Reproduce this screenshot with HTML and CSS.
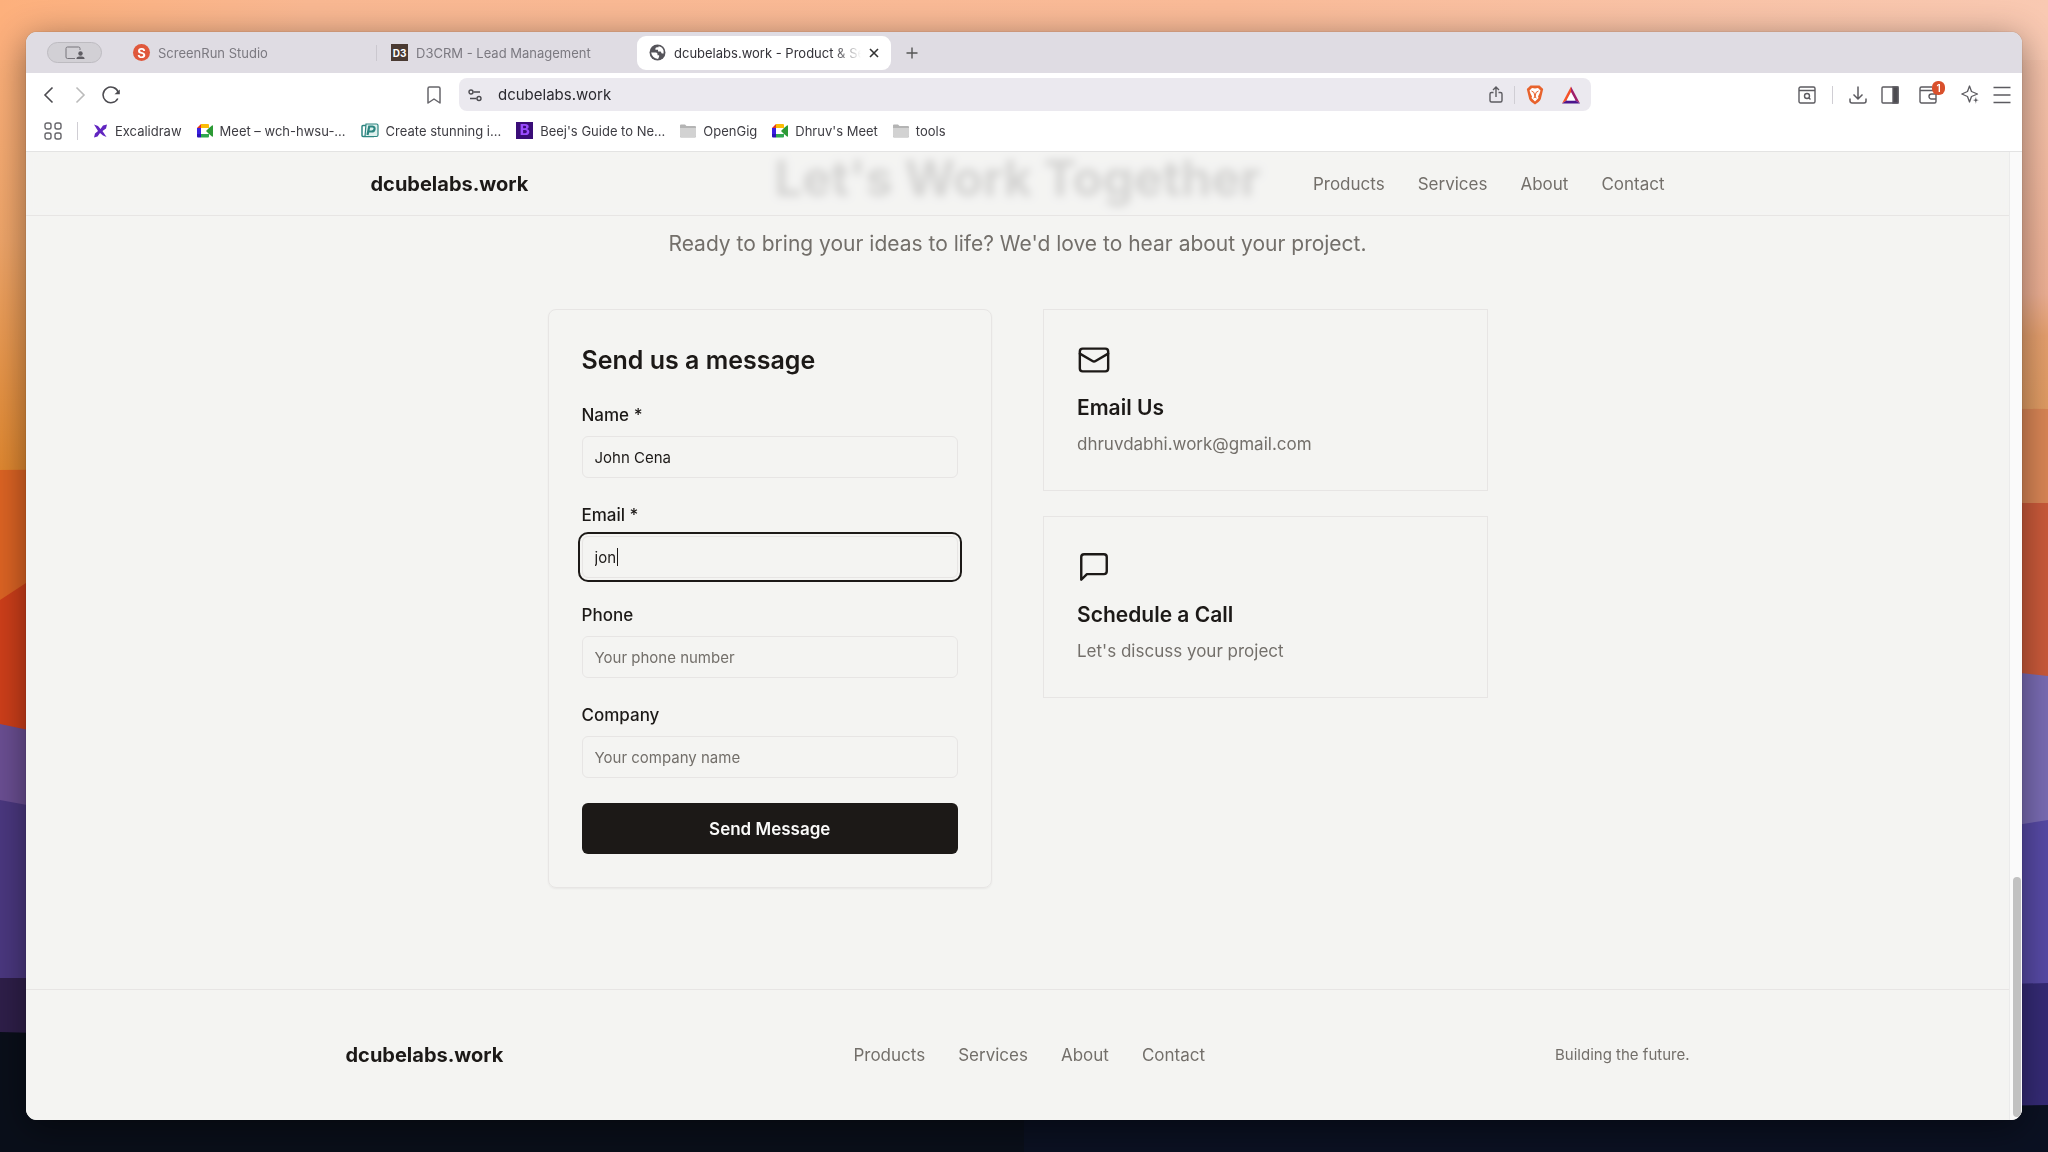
FILE: index.html
```html
<!DOCTYPE html>
<html lang="en">
<head>
<meta charset="UTF-8">
<meta name="viewport" content="width=device-width, initial-scale=1">
<title>dcubelabs.work - Product &amp; Services</title>
<link rel="stylesheet" href="styles.css">
</head>
<body>

<!-- wallpaper -->
<svg class="wallpaper" viewBox="0 0 2048 1152" preserveAspectRatio="none" aria-hidden="true">
  <defs>
    <linearGradient id="sky-left" x1="0" y1="0" x2="0" y2="1">
      <stop offset="0" stop-color="#ffb27e"/>
      <stop offset="0.5" stop-color="#f0a66a"/>
      <stop offset="1" stop-color="#e0872e"/>
    </linearGradient>
    <linearGradient id="sky-right" x1="0" y1="0" x2="0" y2="1">
      <stop offset="0" stop-color="#f9c9b2"/>
      <stop offset="0.7" stop-color="#eeb094"/>
      <stop offset="0.8" stop-color="#e6a06e"/>
      <stop offset="1" stop-color="#e09c62"/>
    </linearGradient>
    <linearGradient id="sky-top" x1="0" y1="0" x2="1" y2="0">
      <stop offset="0" stop-color="#fdb07c"/>
      <stop offset="0.15" stop-color="#f9b892"/>
      <stop offset="0.6" stop-color="#fabb98"/>
      <stop offset="1" stop-color="#f9c9b2"/>
    </linearGradient>
  </defs>
  <rect width="2048" height="1152" fill="#0b1020"/>
  <rect width="1024" height="480" fill="url(#sky-left)"/>
  <rect x="1024" width="1024" height="420" fill="url(#sky-right)"/>
  <rect width="2048" height="60" fill="url(#sky-top)"/>
  <path d="M0 470L1024 460V800H0z" fill="#dd6424"/>
  <path d="M0 600L26 583L1024 500V900H0z" fill="#cf3f1a"/>
  <path d="M0 724L1024 940V1000H0z" fill="#6b4f93"/>
  <path d="M0 800L1024 990V1152H0z" fill="#4b3880"/>
  <path d="M0 978H1024V1152H0z" fill="#2f1f4a"/>
  <path d="M0 1032L1024 1060V1152H0z" fill="#0a0f1a"/>
  <path d="M1024 400L2048 409V800H1024z" fill="#da8656"/>
  <path d="M1024 500L2048 503V900H1024z" fill="#cb5a3a"/>
  <path d="M1024 560L2048 676V1000H1024z" fill="#7a6cb4"/>
  <path d="M1024 980L2048 820V1152H1024z" fill="#574aa6"/>
  <path d="M1024 1010L2048 983V1152H1024z" fill="#352b76"/>
  <path d="M1024 1120L2048 1105V1152H1024z" fill="#0b1122"/>
</svg>

<div class="window">

  <!-- tab strip -->
  <div class="tabs">
    <button class="profile" aria-label="Shared screen">
      <svg width="20" height="14" viewBox="0 0 20 14" fill="none" stroke="#77757b" stroke-width="1">
        <path d="M10 12.500H2.500A1.500 1.500 0 0 1 1 11V2.500A1.500 1.500 0 0 1 2.500 1H13.500A1.500 1.500 0 0 1 15 2.500V4" />
        <circle cx="15.500" cy="7.500" r="2.200" fill="#5f5d63" stroke="none"/>
        <path d="M11.500 13V12Q12 10.500 14 10.500H17Q19 10.500 19.500 12V13z" fill="#5f5d63" stroke="none"/>
      </svg>
    </button>
    <div class="tab">
      <span class="favicon favicon-s">S</span>
      <span class="tab-title">ScreenRun Studio</span>
    </div>
    <div class="tab tab-divided">
      <span class="favicon favicon-d3">D3</span>
      <span class="tab-title">D3CRM - Lead Management</span>
    </div>
    <div class="tab active">
      <svg width="17" height="17" viewBox="0 0 16 16">
        <circle cx="8" cy="8" r="7.500" fill="#55545a"/>
        <path d="M2 8H6.500Q8 8 8 9.500V10.500H9.500V12L8.500 14Q3 13.500 2 8zM6 4.500Q6 3 7.500 3H9V2.200Q12.500 2.800 13.700 6V9H12.500Q11.500 9 11.500 8Q11.500 7 10.500 7H8.500V5.500H6z" fill="#fff"/>
      </svg>
      <span class="tab-title">dcubelabs.work - Product &amp; Se</span>
      <button class="icon-btn" aria-label="Close tab">
        <svg width="10" height="10" viewBox="0 0 10 10" fill="none" stroke="#333" stroke-width="1.600"><path d="M1 1L9 9M9 1L1 9"/></svg>
      </button>
    </div>
    <button class="icon-btn new-tab" aria-label="New tab">
      <svg width="12" height="12" viewBox="0 0 12 12" fill="none" stroke="#555" stroke-width="1.400"><path d="M6 0.500V11.500M0.500 6H11.500"/></svg>
    </button>
  </div>

  <!-- toolbar -->
  <div class="toolbar">
    <div class="toolbar-left">
      <button class="icon-btn" aria-label="Back">
        <svg width="18" height="18" viewBox="0 0 18 18" fill="none" stroke="#4c4b50" stroke-width="1.600"><path d="M12.500 1.500L5 9L12.500 16.500"/></svg>
      </button>
      <button class="icon-btn" aria-label="Forward">
        <svg width="18" height="18" viewBox="0 0 18 18" fill="none" stroke="#bbb" stroke-width="1.600"><path d="M5.500 1.500L13 9L5.500 16.500"/></svg>
      </button>
      <button class="icon-btn" aria-label="Reload">
        <svg width="18" height="18" viewBox="0 0 18 18" fill="none" stroke="#4c4b50" stroke-width="1.600"><path d="M15.800 12.500A7.800 7.800 0 1 1 16.300 6.500"/><path d="M17.800 3.500V8.200H12.500z" fill="#4c4b50" stroke="none"/></svg>
      </button>
      <button class="icon-btn bookmark" aria-label="Bookmark this page">
        <svg width="14" height="18" viewBox="0 0 14 18" fill="none" stroke="#66656a" stroke-width="1.500" stroke-linejoin="round"><path d="M1 2.500A1.500 1.500 0 0 1 2.500 1H11.500A1.500 1.500 0 0 1 13 2.500V17L7 13L1 17z"/></svg>
      </button>
    </div>
    <div class="url-bar">
      <button class="icon-btn" aria-label="Site settings">
        <svg width="14" height="14" viewBox="0 0 14 14" fill="none" stroke="#4c4b50" stroke-width="1.400"><circle cx="3" cy="4" r="2"/><path d="M5.500 4H12M2 10.500H8.500"/><circle cx="11" cy="10.500" r="2"/></svg>
      </button>
      <input class="url-input" type="text" value="dcubelabs.work" aria-label="Address">
      <button class="icon-btn" aria-label="Share">
        <svg width="14" height="18" viewBox="0 0 14 18" fill="none" stroke="#5c5b60" stroke-width="1.400"><path d="M4.500 6.500H2.500A1.500 1.500 0 0 0 1 8V14.500A1.500 1.500 0 0 0 2.500 16H11.500A1.500 1.500 0 0 0 13 14.500V8A1.500 1.500 0 0 0 11.500 6.500H9.500M7 11V1.500M4 4L7 1L10 4"/></svg>
      </button>
      <span class="divider"></span>
      <button class="icon-btn" aria-label="Brave Shields">
        <svg width="18" height="20" viewBox="0 0 18 20"><path d="M4.500 0.500H13.500L15.300 2.300L17.200 4L16.500 7L14.800 14Q14.300 15.500 12.500 17L9 19.500L5.500 17Q3.700 15.500 3.200 14L1.500 7L0.800 4L2.700 2.300z" fill="#e8622c"/><path d="M9 3.500L12 3L14.500 5.500L13.500 8.500L12 11.500L12.500 13L9 16.500L5.500 13L6 11.500L4.500 8.500L3.500 5.500L6 3z" fill="#fff"/><path d="M5.500 6L8 7.500L9 12L10 7.500L12.500 6M7.500 13L9 12L10.500 13" stroke="#e8622c" fill="none"/></svg>
      </button>
      <button class="icon-btn rewards" aria-label="Rewards">
        <svg width="18" height="18" viewBox="0 0 18 18"><path d="M9 0.500L0 17.500L4.500 14.500L9 6z" fill="#f5522a"/><path d="M9 0.500L18 17.500L13.500 14.500L9 6z" fill="#a0206b"/><path d="M0 17.500H18L13.500 14.500H4.500z" fill="#4b148c"/><path d="M9 6.500L13.300 14.500H4.700z" fill="#fff"/></svg>
      </button>
    </div>
    <div class="toolbar-right">
      <button class="icon-btn" aria-label="Search tabs">
        <svg width="18" height="18" viewBox="0 0 18 18" fill="none" stroke="#5c5b60" stroke-width="1.400"><rect x="1" y="1" width="16" height="16" rx="1.500"/><path d="M1 4.500H17M11 12L12.500 13.500"/><circle cx="9" cy="10" r="2.500"/></svg>
      </button>
      <span class="divider"></span>
      <button class="icon-btn" aria-label="Downloads">
        <svg width="18" height="18" viewBox="0 0 18 18" fill="none" stroke="#5c5b60" stroke-width="1.500"><path d="M9 0.500V12.500M4.500 8.500L9 13L13.500 8.500M1 12.500V15A2 2 0 0 0 3 17H15A2 2 0 0 0 17 15V12.500"/></svg>
      </button>
      <button class="icon-btn" aria-label="Sidebar">
        <svg width="18" height="18" viewBox="0 0 18 18" fill="none" stroke="#5c5b60" stroke-width="1.400"><rect x="1" y="1" width="16" height="16" rx="1"/><path d="M12 1H17V17H12z" fill="#4c4b50"/></svg>
      </button>
      <button class="icon-btn wallet" aria-label="Wallet, 1 notification">
        <svg width="18" height="18" viewBox="0 0 18 18" fill="none" stroke="#5c5b60" stroke-width="1.400"><path d="M17 7V15.500A1.500 1.500 0 0 1 15.500 17H2.500A1.500 1.500 0 0 1 1 15.500V2.500A1.500 1.500 0 0 1 2.500 1H13M1 4.500H14"/><path d="M18 8H12.500A2.500 2.500 0 0 0 12.500 13H17"/></svg>
        <span class="badge">1</span>
      </button>
      <button class="icon-btn" aria-label="Leo AI">
        <svg width="18" height="19" viewBox="0 0 18 19" fill="none" stroke="#5c5b60" stroke-width="1.300" stroke-linejoin="round"><path d="M8.500 1L10.500 6.500L16.500 9L10.500 11.500L8.500 17L6.500 11.500L0.800 9L6.500 6.500z"/><path d="M14.800 11.500L15.700 14.300L18 15.200L15.700 16.100L14.800 18.900L13.900 16.100L11.600 15.200L13.900 14.300z" fill="#5c5b60" stroke="#fff" stroke-width="0.500"/></svg>
      </button>
      <button class="icon-btn" aria-label="Menu">
        <svg width="18" height="18" viewBox="0 0 18 18" fill="none" stroke="#5c5b60" stroke-width="1.500"><path d="M0.500 1.500H17.500M0.500 9H17.500M0.500 16.500H17.500"/></svg>
      </button>
    </div>
  </div>

  <!-- bookmarks -->
  <div class="bookmarks">
    <button class="icon-btn" aria-label="All bookmarks">
      <svg width="18" height="18" viewBox="0 0 18 18" fill="none" stroke="#66656a" stroke-width="1.400"><rect x="1" y="1" width="6" height="6" rx="2"/><rect x="11" y="1" width="6" height="6" rx="2"/><rect x="1" y="11" width="6" height="6" rx="2"/><rect x="11" y="11" width="6" height="6" rx="2"/></svg>
    </button>
    <span class="divider"></span>
    <a class="bookmark-link" href="#">
      <svg width="15" height="14" viewBox="0 0 15 14"><path d="M1 0.500L5 2L7.500 5L10 1.500L14 0.500L13 4.500L9.500 7L13.500 13L10 11.500L7 9L4.500 12.500L1 13.500L2 9.500L5 7z" fill="#6125c0"/></svg>
      Excalidraw
    </a>
    <a class="bookmark-link" href="#">
      <svg width="16" height="14" viewBox="0 0 16 14"><path d="M0 4L4 0V4z" fill="#e3371e"/><path d="M4 0H11Q12 0 12 1V4H4z" fill="#fbbc04"/><path d="M0 4H4V10H0z" fill="#3a1fe0"/><path d="M0 10H4V13.500H1Q0 13.500 0 12.500z" fill="#2a12b8"/><path d="M4 10H12V12.500Q12 13.500 11 13.500H4z" fill="#2fa84f"/><path d="M9 7L12 4L15 1.500Q16 1 16 2V12Q16 13 15 12.500L12 10z" fill="#2c9a35"/></svg>
      Meet – wch-hwsu-...
    </a>
    <a class="bookmark-link" href="#">
      <svg width="18" height="15" viewBox="0 0 18 15" fill="none" stroke="#2c8580"><path d="M5 2.500H2Q1 2.500 1 3.500V12.500Q1 13.500 2 13.500H13" stroke-width="1.500"/><path d="M5 1H15.500Q17 1 17 2.500V12Q17 13.500 15.500 13.500H4z" stroke-width="1.200" fill="#dff1ee"/><path d="M6.500 12L8.200 3.500H11.500Q14 3.800 13.500 6.200Q13 8.500 10.500 8.500H8" stroke-width="2.200"/></svg>
      Create stunning i...
    </a>
    <a class="bookmark-link" href="#">
      <span class="favicon favicon-b">B</span>
      Beej's Guide to Ne...
    </a>
    <a class="bookmark-link" href="#">
      <svg width="16" height="14" viewBox="0 0 16 14"><path d="M0 1.500Q0 0.500 1 0.500H5L6.500 2H15Q16 2 16 3V12.500Q16 13.500 15 13.500H1Q0 13.500 0 12.500z" fill="#b4b4b4"/><path d="M0 4H16V12Q16 13 15 13H1Q0 13 0 12z" fill="#d2d2d2"/></svg>
      OpenGig
    </a>
    <a class="bookmark-link" href="#">
      <svg width="16" height="14" viewBox="0 0 16 14"><path d="M0 4L4 0V4z" fill="#e3371e"/><path d="M4 0H11Q12 0 12 1V4H4z" fill="#fbbc04"/><path d="M0 4H4V10H0z" fill="#3a1fe0"/><path d="M0 10H4V13.500H1Q0 13.500 0 12.500z" fill="#2a12b8"/><path d="M4 10H12V12.500Q12 13.500 11 13.500H4z" fill="#2fa84f"/><path d="M9 7L12 4L15 1.500Q16 1 16 2V12Q16 13 15 12.500L12 10z" fill="#2c9a35"/></svg>
      Dhruv's Meet
    </a>
    <a class="bookmark-link" href="#">
      <svg width="16" height="14" viewBox="0 0 16 14"><path d="M0 1.500Q0 0.500 1 0.500H5L6.500 2H15Q16 2 16 3V12.500Q16 13.500 15 13.500H1Q0 13.500 0 12.500z" fill="#b4b4b4"/><path d="M0 4H16V12Q16 13 15 13H1Q0 13 0 12z" fill="#d2d2d2"/></svg>
      tools
    </a>
  </div>

  <!-- web page -->
  <div class="viewport">
    <div class="page">
      <header class="site-header">
        <div class="header-inner">
          <a class="logo" href="#">dcubelabs.work</a>
          <nav class="nav">
            <a href="#">Products</a>
            <a href="#">Services</a>
            <a href="#">About</a>
            <a href="#">Contact</a>
          </nav>
        </div>
      </header>

      <main class="contact">
        <h2 class="contact-title">Let's Work Together</h2>
        <p class="contact-lead">Ready to bring your ideas to life? We'd love to hear about your project.</p>

        <div class="contact-grid">
          <form class="form-card">
            <h3 class="form-title">Send us a message</h3>
            <div class="field">
              <label for="name">Name *</label>
              <input id="name" type="text" value="John Cena">
            </div>
            <div class="field">
              <label for="email">Email *</label>
              <input id="email" type="text" inputmode="email" value="jon" autofocus>
              <span class="caret"></span>
            </div>
            <div class="field">
              <label for="phone">Phone</label>
              <input id="phone" type="tel" placeholder="Your phone number">
            </div>
            <div class="field">
              <label for="company">Company</label>
              <input id="company" type="text" placeholder="Your company name">
            </div>
            <button class="submit" type="button">Send Message</button>
          </form>

          <div class="info">
            <section class="info-card">
              <svg width="34" height="34" viewBox="0 0 24 24" fill="none" stroke="#1c1917" stroke-width="1.700" stroke-linecap="round" stroke-linejoin="round"><rect x="2" y="4" width="20" height="16" rx="2"/><path d="M2 7.500L10.900 12.700a2 2 0 0 0 2.200 0L22 7.500"/></svg>
              <h3>Email Us</h3>
              <p>dhruvdabhi.work@gmail.com</p>
            </section>
            <section class="info-card">
              <svg width="34" height="34" viewBox="0 0 24 24" fill="none" stroke="#1c1917" stroke-width="1.700" stroke-linecap="round" stroke-linejoin="round"><path d="M21 15a2 2 0 0 1-2 2H7l-4 4V5a2 2 0 0 1 2-2h14a2 2 0 0 1 2 2z"/></svg>
              <h3>Schedule a Call</h3>
              <p>Let's discuss your project</p>
            </section>
          </div>
        </div>
      </main>

      <footer class="site-footer">
        <div class="footer-inner">
          <a class="logo" href="#">dcubelabs.work</a>
          <nav class="nav">
            <a href="#">Products</a>
            <a href="#">Services</a>
            <a href="#">About</a>
            <a href="#">Contact</a>
          </nav>
          <p class="tagline">Building the future.</p>
        </div>
      </footer>
    </div>
    <div class="scrollbar"><div class="thumb"></div></div>
  </div>
</div>

<script>
  document.getElementById('email').focus();
</script>

</body>
</html>
```
FILE: styles.css
```css
* {
  box-sizing: border-box;
}

body {
  margin: 0;
  min-height: 100vh;
  display: flex;
  padding: 32px 26px;
  background-color: #0b1020;
  font-family: Inter, "Liberation Sans", sans-serif;
  color: #1c1917;
}

h2, h3, p {
  margin: 0;
}

a {
  color: inherit;
  text-decoration: none;
}

button, input {
  font-family: inherit;
}

svg {
  display: block;
  flex: none;
}

.wallpaper {
  position: fixed;
  inset: 0;
  width: 100%;
  height: 100%;
}

/* --- browser window --- */
.window {
  position: relative;
  flex: 1;
  min-width: 0;
  display: flex;
  flex-direction: column;
  overflow: hidden;
  border-radius: 11px;
  background-color: #fff;
  box-shadow: 0 8px 36px rgba(0, 0, 0, 0.45), 0 0 1px rgba(0, 0, 0, 0.5);
}

.icon-btn {
  display: flex;
  flex: none;
  padding: 0;
  border: none;
  background: none;
}

.divider {
  width: 1px;
  height: 18px;
  background-color: #d0ced4;
}

/* tabs */
.tabs {
  display: flex;
  align-items: center;
  gap: 4px;
  height: 41px;
  padding-left: 21px;
  background-color: #dfdce3;
}

.profile {
  display: flex;
  align-items: center;
  justify-content: center;
  width: 55px;
  height: 21px;
  margin-right: 15px;
  padding: 0;
  border: 1px solid #bdbbc0;
  border-radius: 11px;
  background-color: #d2d0d5;
}

.tab {
  position: relative;
  display: flex;
  align-items: center;
  gap: 8px;
  width: 254px;
  height: 34px;
  padding: 0 12px;
  border-radius: 9px;
  font-size: 13px;
  color: #7b7980;
}

.tab-divided::before {
  content: "";
  position: absolute;
  left: -3px;
  width: 1px;
  height: 16px;
  background-color: #cbc8cf;
}

.tab.active {
  background-color: #fff;
  color: #333238;
}

.tab-title {
  flex: 1;
  overflow: hidden;
  white-space: nowrap;
}

.active .tab-title {
  -webkit-mask-image: linear-gradient(to right, #000 85%, transparent);
  mask-image: linear-gradient(to right, #000 85%, transparent);
}

.favicon {
  display: flex;
  flex: none;
  align-items: center;
  justify-content: center;
  width: 17px;
  height: 17px;
  font-size: 10px;
  font-weight: 700;
  color: #fff;
}

.favicon-s {
  border-radius: 50%;
  background-color: #e0583c;
  font-size: 13px;
}

.favicon-d3 {
  background-color: #4a3a32;
}

.favicon-b {
  background-color: #3a0d78;
  font-family: "Liberation Mono", monospace;
  font-size: 17px;
  color: #9b4dff;
}

.new-tab {
  margin-left: 11px;
}

/* toolbar */
.toolbar {
  display: flex;
  align-items: center;
  height: 43px;
  padding: 0 11px 0 13px;
}

.toolbar-left,
.toolbar-right {
  display: flex;
  flex: 1;
  align-items: center;
}

.toolbar-left {
  gap: 13px;
  padding: 0 18px 0 1px;
}

.toolbar-right {
  justify-content: flex-end;
  gap: 14px;
  padding-left: 19px;
}

.toolbar-right .divider {
  margin: 0 2px;
}

.bookmark {
  margin-left: auto;
}

.url-bar {
  display: flex;
  flex: 0 1 1132px;
  align-items: center;
  gap: 12px;
  height: 33px;
  padding: 0 11px 0 9px;
  border-radius: 8px;
  background-color: #ebe9ef;
}

.url-bar .divider {
  margin: 0 -1px;
}

.url-input {
  flex: 1;
  min-width: 0;
  padding: 0 4px;
  border: none;
  outline: none;
  background: none;
  font-size: 15px;
  color: #2b2a30;
}

.rewards {
  margin-left: 6px;
}

.wallet {
  position: relative;
  margin: 0 10px 0 6px;
}

.badge {
  position: absolute;
  top: -5px;
  left: 13px;
  width: 13px;
  border-radius: 6px;
  background-color: #d9502c;
  font-size: 10px;
  font-weight: 600;
  line-height: 14px;
  text-align: center;
  color: #fff;
}

/* bookmarks bar */
.bookmarks {
  display: flex;
  align-items: center;
  gap: 15px;
  height: 36px;
  padding: 0 18px 6px;
  border-bottom: 1px solid #e3e3e3;
  font-size: 13px;
  color: #3d3c42;
}

.bookmark-link {
  display: flex;
  align-items: center;
  gap: 7px;
  white-space: nowrap;
}

/* --- site --- */
.viewport {
  display: flex;
  flex: 1;
}

.page {
  position: relative;
  flex: 1;
  min-width: 0;
  display: flex;
  flex-direction: column;
  overflow: hidden;
  background-color: #f4f4f2;
}

.scrollbar {
  display: flex;
  flex-direction: column;
  justify-content: flex-end;
  width: 13px;
  padding: 3px 1px 3px 3px;
  border-left: 1px solid #ebebeb;
  background-color: #fafafa;
}

.thumb {
  height: 25%;
  border-radius: 4px;
  background-color: #c1c1c1;
}

/* the header stays on top of the scrolled page */
.site-header {
  position: absolute;
  top: 0;
  left: 0;
  right: 0;
  z-index: 1;
  border-bottom: 1px solid #e7e5e4;
  background-color: rgba(243, 243, 242, 0.85);
  -webkit-backdrop-filter: blur(4px);
  backdrop-filter: blur(4px);
}

.header-inner,
.footer-inner {
  display: flex;
  align-items: center;
  justify-content: space-between;
  max-width: 1344px;
  margin: 0 auto;
}

.header-inner {
  height: 63px;
  padding: 0 25px;
}

.logo {
  font-size: 20px;
  font-weight: 700;
}

.nav {
  display: flex;
  gap: 33px;
  font-size: 17px;
  color: #736f6a;
}

.contact {
  padding-bottom: 101px;
}

.contact-title {
  font-size: 49px;
  font-weight: 700;
  line-height: 54px;
  text-align: center;
}

.contact-lead {
  margin: 21px 0 48px;
  font-size: 21px;
  line-height: 34px;
  text-align: center;
  color: #736f6a;
}

.contact-grid {
  display: grid;
  grid-template-columns: 1fr 1fr;
  gap: 51px;
  align-items: start;
  max-width: 940px;
  margin: 0 auto;
}

.form-card {
  display: flex;
  flex-direction: column;
  gap: 25px;
  padding: 33px;
  border: 1px solid #e7e5e4;
  border-radius: 8px;
  box-shadow: 0 1px 2px rgba(0, 0, 0, 0.05);
}

.form-title {
  font-size: 25px;
  font-weight: 600;
  line-height: 35px;
}

.field {
  position: relative;
  display: flex;
  flex-direction: column;
  gap: 8px;
}

.field label {
  font-size: 17px;
  font-weight: 500;
  line-height: 25px;
}

.field input {
  width: 100%;
  height: 42px;
  padding: 0 12px;
  border: 1px solid #e7e5e4;
  border-radius: 6px;
  background: none;
  font-size: 15px;
  color: #1c1917;
  caret-color: transparent;
}

.field input::placeholder {
  color: #736f6a;
}

.field input:focus {
  outline: 2px solid #1c1917;
  outline-offset: 2px;
}

/* steady caret after the typed text */
.caret {
  position: absolute;
  bottom: 12px;
  left: 35px;
  width: 1px;
  height: 18px;
  background-color: #1c1917;
}

.submit {
  height: 51px;
  border: none;
  border-radius: 6px;
  background-color: #1c1917;
  font-size: 17px;
  font-weight: 600;
  color: #fafaf9;
}

.info {
  display: flex;
  flex-direction: column;
  gap: 25px;
}

.info-card {
  padding: 33px;
  border: 1px solid #e7e5e4;
}

.info-card h3 {
  margin: 16px 0 8px;
  font-size: 21px;
  font-weight: 600;
  line-height: 30px;
}

.info-card p {
  font-size: 17px;
  line-height: 26px;
  color: #736f6a;
}

.site-footer {
  flex: 1;
  border-top: 1px solid #e7e5e4;
}

.footer-inner {
  min-height: 129px;
}

.tagline {
  font-size: 15px;
  color: #736f6a;
}
```
